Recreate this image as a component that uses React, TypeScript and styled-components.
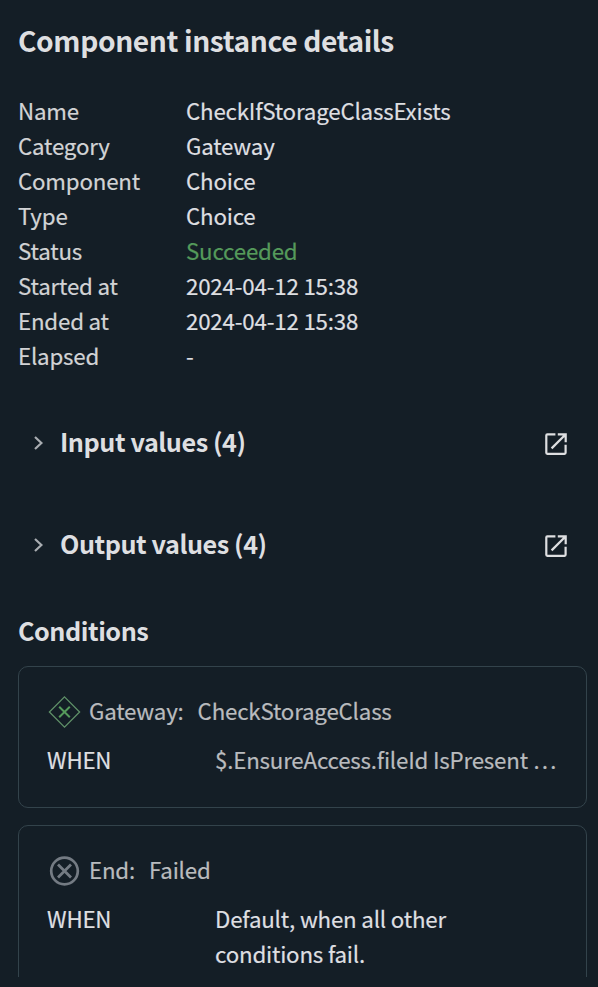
import React from "react";
import styled, { createGlobalStyle } from "styled-components";

const GlobalStyle = createGlobalStyle`
  * { box-sizing: border-box; }
  body {
    margin: 0;
    background: #141e26;
    color: #dedfe1;
    font-family: "Noto Sans CJK SC", "Noto Sans", sans-serif;
    font-size: 22.3px;
    letter-spacing: -0.19px;
    line-height: 35px;
    -webkit-text-stroke: 0.2px currentColor;
  }
`;

const Panel = styled.main`
  height: 977px;
  padding: 20px 11px 0 18px;
  overflow: hidden;
  display: flex;
  flex-direction: column;
`;

const Title = styled.h1`
  margin: 0 0 33px;
  height: 40px;
  font-size: 28.2px;
  line-height: 40px;
  font-weight: 700;
  letter-spacing: -0.39px;
  white-space: nowrap;
  -webkit-text-stroke: 0;
`;

const Details = styled.dl`
  margin: 0 0 34px;
  display: grid;
  grid-template-columns: 168px 1fr;
  grid-auto-rows: 35px;
`;

const Label = styled.dt`
  color: #d2d3d5;
  white-space: nowrap;
`;

const Value = styled.dd<{ $tone?: "success" }>`
  margin: 0;
  white-space: nowrap;
  color: ${(p) => (p.$tone === "success" ? "#559a5b" : "#dedfe1")};
`;

const Section = styled.section`
  flex: none;
  height: 72px;
  margin-bottom: 30px;
  padding: 0 19px 0 12px;
  display: flex;
  align-items: center;
`;

const SectionTitle = styled.h2`
  margin: -4px 0 0;
  flex: 1;
  font-size: 25.2px;
  line-height: 36px;
  font-weight: 700;
  letter-spacing: -0.44px;
  -webkit-text-stroke: 0;
`;

const ChevronIcon = styled.svg`
  width: 18px;
  height: 18px;
  margin-right: 12px;
  stroke: #a9adb1;
`;

const IconButton = styled.button`
  display: flex;
  padding: 0;
  margin-top: 2px;
  border: 0;
  background: none;
  color: #dedfe1;
`;

const ConditionsTitle = styled.h2`
  margin: 1px 0 18px;
  font-size: 25.2px;
  line-height: 36px;
  font-weight: 700;
  letter-spacing: -0.46px;
  -webkit-text-stroke: 0;
`;

const Card = styled.article`
  flex: none;
  min-height: 142px;
  margin-bottom: 17px;
  padding: 26px 28px 28px;
  border: 1px solid #33434b;
  border-radius: 10px;
`;

const CardHeader = styled.header`
  display: flex;
  height: 35px;
  margin-bottom: 14px;
  align-items: center;
  color: #b9bbbe;
`;

const NodeIcon = styled.svg`
  width: 34px;
  height: 34px;
  margin: 2px 8px 0 0;
`;

const NodeKind = styled.span`
  margin-right: 14px;
`;

const Rule = styled.div`
  display: grid;
  grid-template-columns: 168px 1fr;
`;

const RuleText = styled.div<{ $muted?: boolean }>`
  min-width: 0;
  color: ${(p) => (p.$muted ? "#b9bbbe" : "#dedfe1")};
  ${(p) => (p.$muted ? "white-space: nowrap;" : "max-width: 270px;")}
`;

const OpenIcon = () => (
  <svg width="24" height="24" viewBox="0 0 24 24" fill="none" stroke="currentColor" strokeWidth="2.2">
    <path d="M11.4 2.4H3.3a1 1 0 0 0-1 1V20.8a1 1 0 0 0 1 1H20.6a1 1 0 0 0 1-1V12.8" />
    <path d="M7.6 16.4L21 3" />
    <path d="M13.8 2.3H21.7V10.2" />
    <path d="M17.4 2.3H21.7V6.6Z" fill="currentColor" stroke="none" />
  </svg>
);

const details: { label: string; value: string; tone?: "success" }[] = [
  { label: "Name", value: "CheckIfStorageClassExists" },
  { label: "Category", value: "Gateway" },
  { label: "Component", value: "Choice" },
  { label: "Type", value: "Choice" },
  { label: "Status", value: "Succeeded", tone: "success" },
  { label: "Started at", value: "2024-04-12 15:38" },
  { label: "Ended at", value: "2024-04-12 15:38" },
  { label: "Elapsed", value: "-" },
];

const ValuesSection = ({ title }: { title: string }) => (
  <Section>
    <ChevronIcon viewBox="0 0 18 18" fill="none" strokeWidth="2.2">
      <path d="M5 3l6.4 6L5 15" />
    </ChevronIcon>
    <SectionTitle>{title}</SectionTitle>
    <IconButton aria-label={`Open ${title}`}>
      <OpenIcon />
    </IconButton>
  </Section>
);

export default function App() {
  return (
    <>
      <GlobalStyle />
      <Panel>
        <Title>Component instance details</Title>
        <Details>
          {details.map((d) => (
            <React.Fragment key={d.label}>
              <Label>{d.label}</Label>
              <Value $tone={d.tone}>{d.value}</Value>
            </React.Fragment>
          ))}
        </Details>
        <ValuesSection title="Input values (4)" />
        <ValuesSection title="Output values (4)" />
        <ConditionsTitle>Conditions</ConditionsTitle>
        <Card>
          <CardHeader>
            <NodeIcon viewBox="0 0 34 34" fill="none" stroke="#559a5b">
              <path d="M17.5 1.9L32.6 17L17.5 32.1L2.4 17Z" stroke="#5f9068" strokeWidth="1.3" />
              <path d="M12.2 11.7l10.6 10.6M22.8 11.7L12.2 22.3" strokeWidth="2" />
            </NodeIcon>
            <NodeKind>Gateway:</NodeKind>
            <span>CheckStorageClass</span>
          </CardHeader>
          <Rule>
            <span>WHEN</span>
            <RuleText $muted>$.EnsureAccess.fileId IsPresent …</RuleText>
          </Rule>
        </Card>
        <Card>
          <CardHeader>
            <NodeIcon viewBox="0 0 34 34" fill="none" stroke="#747b83">
              <circle cx="17.5" cy="17" r="13.3" strokeWidth="2.7" />
              <path d="M11 10.5l13 13M24 10.5l-13 13" strokeWidth="2.8" />
            </NodeIcon>
            <NodeKind>End:</NodeKind>
            <span>Failed</span>
          </CardHeader>
          <Rule>
            <span>WHEN</span>
            <RuleText>Default, when all other conditions fail.</RuleText>
          </Rule>
        </Card>
      </Panel>
    </>
  );
}
